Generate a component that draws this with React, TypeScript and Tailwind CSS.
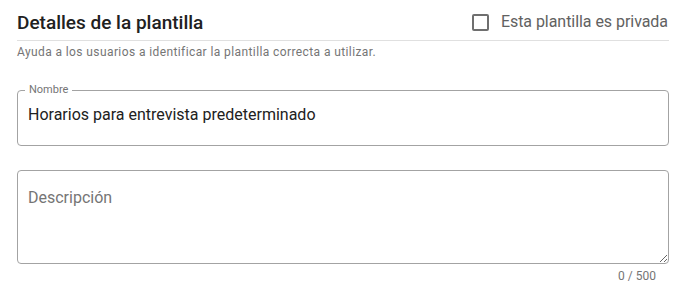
import React from "react";

export default function App() {
  return (
    <div
      className="w-[685px] h-[291px] bg-white pl-[17px] pr-[16px] pt-[11px]"
      style={{ fontFamily: "Roboto, 'Liberation Sans', sans-serif" }}
    >
      <div className="flex items-start justify-between border-b border-[#e0e0e0] pb-[5px]">
        <h2 className="text-[19px] leading-[24px] font-medium text-[#212121]">
          Detalles de la plantilla
        </h2>
        <label className="flex items-center gap-[12px] pt-[1px] pr-[1px]">
          <span className="block w-[17px] h-[17px] border-2 border-[#6f6f6f] rounded-[2px]" />
          <span className="text-[16px] leading-[20px] tracking-[-0.05px] text-[#616161]">
            Esta plantilla es privada
          </span>
        </label>
      </div>
      <p className="mt-[3px] text-[12px] leading-[16px] tracking-[0.4px] text-[#757575]">
        Ayuda a los usuarios a identificar la plantilla correcta a utilizar.
      </p>

      <fieldset className="mt-[24px] h-[62px] border border-[#a3a3a3] rounded-[4px] pl-[7px] pr-[10px]">
        <legend className="px-[4px] text-[11px] leading-[12px] text-[#757575]">
          Nombre
        </legend>
        <div className="pl-[3px] pt-[7px] text-[16px] leading-[24px] text-[#212121]">
          Horarios para entrevista predeterminado
        </div>
      </fieldset>

      <textarea
        className="mt-[24px] block w-full h-[94px] border border-[#a3a3a3] rounded-[4px] pt-[15px] px-[10px] text-[16px] leading-[24px] text-[#212121] placeholder:text-[#757575] resize-y outline-none"
        placeholder="Descripción"
        style={{ fontFamily: "Roboto, 'Liberation Sans', sans-serif" }}
      />
      <div className="mt-[4px] pr-[13px] text-right text-[12px] leading-[16px] text-[#757575]">
        0 / 500
      </div>
    </div>
  );
}
